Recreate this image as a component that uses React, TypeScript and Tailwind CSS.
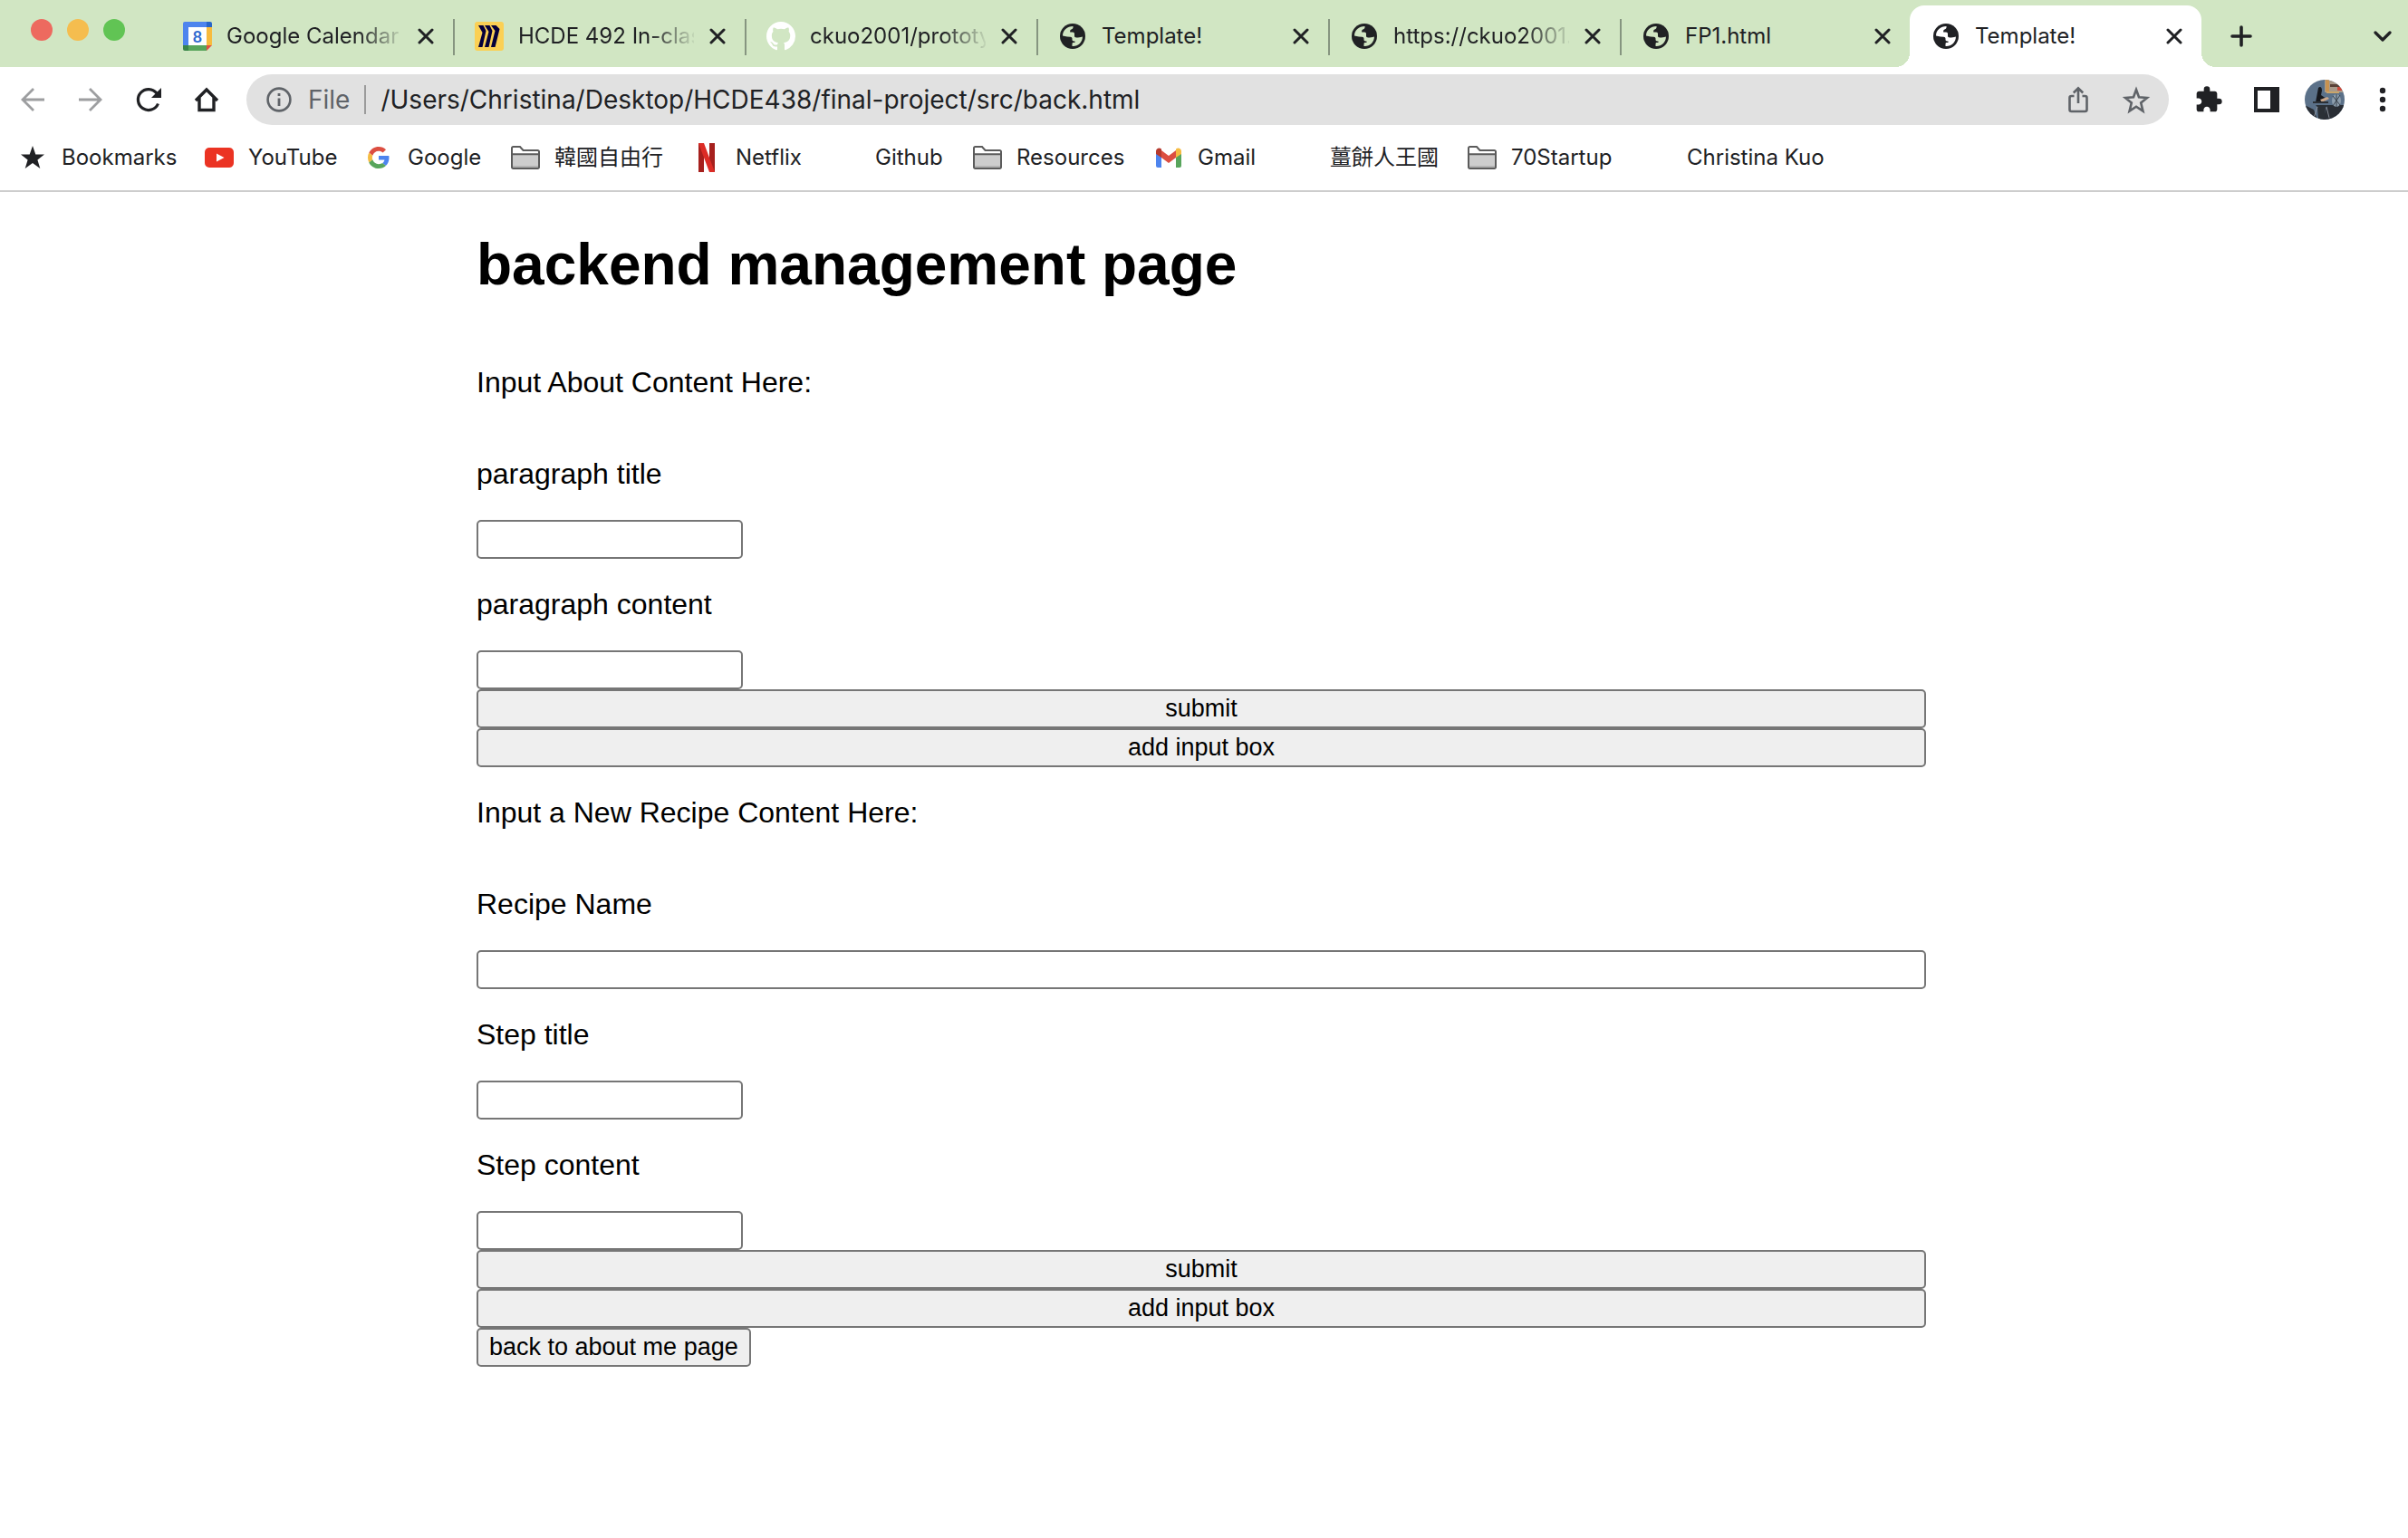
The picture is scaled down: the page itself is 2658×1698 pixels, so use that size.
import React from "react";

const ui = "font-['Inter','Noto_Sans_CJK_TC',sans-serif]";

function Globe() {
  return (
    <svg viewBox="0 0 28 28" className="size-7">
      <circle cx="14" cy="14" r="14" fill="#202124" />
      <path d="M3 13.500C3 7.500 8 3 14.500 3c.3 1.500-.2 2.700-1.500 3.200-1.500.5-2 1.200-1.800 3.300h2.800c1.500 0 2 .8 2 2v2.300c0 1.200.8 1.700 2.200 1.700 2.300 0 4-.2 6.700-1 .2 6-5 11-11.400 10.500v-2.500c0-1 .5-1.500 1.500-1.500h1.500v-1.500c-1.500 0-3-.3-3-1.500v-1.300c0-1.200-.8-2-2-2L8 14.500z" fill="currentColor" />
    </svg>
  );
}

function CalendarIcon() {
  return (
    <svg viewBox="0 0 32 32" className="size-8">
      <path d="M2 0h24v6H6v20H0V2a2 2 0 0 1 2-2z" fill="#4d84ee" />
      <path d="M26 0h4a2 2 0 0 1 2 2v4h-6z" fill="#2866c9" />
      <path d="M26 6h6v20h-6z" fill="#f7bb3d" />
      <path d="M6 26h20v6H6z" fill="#58a55c" />
      <path d="M0 26h6v6H2a2 2 0 0 1-2-2z" fill="#3a8548" />
      <path d="M26 26h6l-6 6z" fill="#e25143" />
      <path d="M6 6h20v20H6z" fill="#fff" />
      <text x="16" y="23" textAnchor="middle" fontSize="19" fontFamily="Roboto" fontWeight="500" fill="#2f69d0">8</text>
    </svg>
  );
}

function MiroIcon() {
  return (
    <svg viewBox="0 0 32 32" className="size-8">
      <rect width="32" height="32" rx="3" fill="#fbd054" />
      <path d="M4 4h5.500l3 6-4 18H4l4.500-16zM11 4h5.500l3 6-4 18H11l4.500-17zM18 4h5.500l4 4-5 20H18l4.500-18z" fill="#05003b" />
    </svg>
  );
}

function GithubIcon() {
  return (
    <svg viewBox="0 0 16 16" className="size-8" fill="#fff">
      <path d="M8 0C3.580 0 0 3.580 0 8c0 3.540 2.290 6.530 5.470 7.590.4.070.55-.17.55-.38 0-.19-.01-.82-.01-1.490-2.010.37-2.530-.49-2.690-.94-.09-.23-.48-.94-.82-1.130-.28-.15-.68-.52-.01-.53.63-.01 1.080.58 1.230.82.72 1.210 1.870.87 2.330.66.07-.52.28-.87.51-1.070-1.780-.2-3.640-.89-3.640-3.950 0-.87.31-1.590.82-2.150-.08-.2-.36-1.020.08-2.120 0 0 .67-.21 2.200.82.64-.18 1.320-.27 2-.27s1.360.09 2 .27c1.530-1.040 2.200-.82 2.200-.82.44 1.100.16 1.920.08 2.120.51.56.82 1.270.82 2.150 0 3.070-1.870 3.750-3.650 3.950.29.25.54.73.54 1.480 0 1.070-.01 1.930-.01 2.200 0 .21.15.46.55.38A8.010 8.010 0 0 0 16 8c0-4.420-3.580-8-8-8z" />
    </svg>
  );
}

function Cross() {
  return (
    <svg viewBox="0 0 18 18" className="size-[18px]" stroke="#202124" strokeWidth="3" strokeLinecap="round">
      <path d="M2 2l14 14M16 2L2 16" />
    </svg>
  );
}

type TabData = { icon: React.ReactNode; title: string; long?: boolean; divider?: boolean; active?: boolean };

const tabs: TabData[] = [
  { icon: <CalendarIcon />, title: "Google Calendar", long: true, divider: true },
  { icon: <MiroIcon />, title: "HCDE 492 In-clas", long: true, divider: true },
  { icon: <GithubIcon />, title: "ckuo2001/prototy", long: true, divider: true },
  { icon: <Globe />, title: "Template!", divider: true },
  { icon: <Globe />, title: "https://ckuo2001.", long: true, divider: true },
  { icon: <Globe />, title: "FP1.html" },
  { icon: <Globe />, title: "Template!", active: true },
];

function Tab({ icon, title, long, divider, active }: TabData) {
  return (
    <div className={`relative flex h-[68px] items-center gap-4 rounded-t-2xl pl-6 ${divider || active ? "w-[322px]" : "w-80"} ${active ? "bg-white pr-5 text-white" : "pr-5 text-[#d1e6c3]"}`}>
      {active && (
        <>
          <span className="absolute bottom-0 -left-4 size-4 bg-[radial-gradient(circle_at_0_0,transparent_16px,white_16px)]" />
          <span className="absolute -right-4 bottom-0 size-4 bg-[radial-gradient(circle_at_100%_0,transparent_16px,white_16px)]" />
        </>
      )}
      <span className="flex w-8 shrink-0 justify-center">{icon}</span>
      <span className={`min-w-0 flex-1 text-2xl whitespace-nowrap text-[#202124] ${long ? "[mask-image:linear-gradient(to_right,black_75%,transparent_102%)]" : ""}`}>{title}</span>
      <button aria-label={`Close ${title}`} className="flex size-5 shrink-0 items-center justify-center"><Cross /></button>
      {divider && <span className="absolute top-[15px] -right-0.5 h-10 w-0.5 bg-[#869580]" />}
    </div>
  );
}

function TabStrip() {
  return (
    <header className="flex h-[74px] items-end bg-[#d1e6c3]">
      <div className="flex h-full w-[178px] shrink-0 items-start gap-4 pt-[21px] pl-[34px]">
        <span className="size-6 rounded-full bg-[#ed6a5f]" />
        <span className="size-6 rounded-full bg-[#f5bd4f]" />
        <span className="size-6 rounded-full bg-[#61c454]" />
      </div>
      {tabs.map((t, i) => <Tab key={i} {...t} />)}
      <button aria-label="New tab" className="ml-8 flex h-[68px] items-center">
        <svg viewBox="0 0 24 24" className="size-6" stroke="#202124" strokeWidth="3.600" strokeLinecap="round"><path d="M12 2v20M2 12h20" /></svg>
      </button>
      <button aria-label="Search tabs" className="mr-[18px] ml-auto flex h-[68px] items-center">
        <svg viewBox="0 0 20 12" className="h-3 w-5" fill="none" stroke="#202124" strokeWidth="3.200" strokeLinecap="round" strokeLinejoin="round"><path d="M2 2l8 8 8-8" /></svg>
      </button>
    </header>
  );
}

function Toolbar() {
  return (
    <div className="flex h-[72px] items-center pr-[22px] pl-5">
      <div className="flex w-[252px] shrink-0 gap-8">
        <button aria-label="Back"><svg viewBox="0 0 32 32" className="size-8" fill="none" stroke="#9d9ea0" strokeWidth="2.800"><path d="M29 16H5M17 4L5 16l12 12" /></svg></button>
        <button aria-label="Forward"><svg viewBox="0 0 32 32" className="size-8" fill="none" stroke="#9d9ea0" strokeWidth="2.800"><path d="M3 16h24M15 4l12 12-12 12" /></svg></button>
        <button aria-label="Reload"><svg viewBox="0 0 32 32" className="size-8" fill="none" stroke="#202124" strokeWidth="3.200"><path d="M26.500 20.500A11.500 11.500 0 1 1 25 9" /><path d="M30 3v11H19z" fill="#202124" stroke="none" /></svg></button>
        <button aria-label="Home"><svg viewBox="0 0 32 32" className="size-8" fill="none" stroke="#202124" strokeWidth="3.400"><path d="M4 17L16 5l12 12M8 14v13.500h16V14" /></svg></button>
      </div>
      <div className="flex h-14 min-w-0 flex-1 items-center rounded-full bg-[#e1e1e1] pr-5 pl-[22px]">
        <svg viewBox="0 0 28 28" className="size-7 shrink-0" fill="none" stroke="#5f6368"><circle cx="14" cy="14" r="12.400" strokeWidth="2.600" /><path d="M14 12.500V21M14 7v3" strokeWidth="2.800" /></svg>
        <span className="ml-[18px] text-[28px] text-[#5f6368]">File</span>
        <span className="mx-4 h-8 w-0.5 bg-[#9b9b9b]" />
        <input aria-label="Address" defaultValue="/Users/Christina/Desktop/HCDE438/final-project/src/back.html" className="min-w-0 flex-1 bg-transparent text-[28px] text-[#202124] outline-none" />
        <button aria-label="Share" className="mr-8"><svg viewBox="0 0 32 32" className="size-8" fill="none" stroke="#5f6368" strokeWidth="2.600"><path d="M11.500 12H8.500a2 2 0 0 0-2 2v13a2 2 0 0 0 2 2h15a2 2 0 0 0 2-2V14a2 2 0 0 0-2-2h-3M16 20V3.500M10.800 8.500L16 3.300l5.200 5.200" /></svg></button>
        <button aria-label="Bookmark this page"><svg viewBox="0 0 32 32" className="size-8" fill="none" stroke="#5f6368" strokeWidth="2.600"><path d="M16 5l3 8.200 9 .8-6.800 5.600 2.200 8.900L16 23.700l-7.400 4.800 2.200-8.900L4 14l9-.8z" /></svg></button>
      </div>
      <div className="ml-7 flex shrink-0 items-center">
        <button aria-label="Extensions"><svg viewBox="0 0 24 24" className="size-8" fill="#202124"><path d="M20.500 11H19V7c0-1.100-.9-2-2-2h-4V3.500a2.500 2.500 0 0 0-5 0V5H4c-1.100 0-2 .9-2 2v3.800h1.500c1.500 0 2.700 1.200 2.700 2.700S5 16.200 3.500 16.200H2V20c0 1.100.9 2 2 2h3.800v-1.500c0-1.500 1.200-2.700 2.700-2.700s2.700 1.200 2.700 2.700V22H17c1.100 0 2-.9 2-2v-4h1.500a2.500 2.500 0 0 0 0-5z" /></svg></button>
        <button aria-label="Side panel" className="ml-8"><svg viewBox="0 0 32 32" className="size-8"><path fillRule="evenodd" d="M2 2h28v28H2zM6 6v20h14V6z" fill="#202124" /></svg></button>
        <button aria-label="Profile" className="ml-[26px]">
          <svg viewBox="0 0 44 44" className="size-11">
            <clipPath id="face"><circle cx="22" cy="22" r="22" /></clipPath>
            <g clipPath="url(#face)">
              <path d="M0 0h44v44H0z" fill="#5b7189" />
              <path d="M22 0h22v14H22z" fill="#a89a8a" />
              <path d="M23 0h4v13h-4z" fill="#c8924f" />
              <path d="M28 5h16v3H28z" fill="#5a4238" />
              <path d="M36 8h5v4h-5z" fill="#cc4a3c" />
              <path d="M24 13h14v2H24z" fill="#c9a46a" />
              <path d="M0 28l10 5 4 11H0zM25 28h19v16H20z" fill="#2a2e35" />
              <path d="M15 9c2-2 4-1 4 3l-1 5 6 4-4 5-8-1z" fill="#17191e" />
              <path d="M17 22l8-3 2 2-8 4z" fill="#c9a68a" />
              <path d="M9 24h17v2H9zM12 28h14l-3 3-1 13h-7l-1-14z" fill="#2b3036" />
              <path d="M14 30l-4 12M24 30l3 12" stroke="#8a9099" />
              <ellipse cx="35" cy="23" rx="5" ry="7" fill="#8c9dad" />
              <path d="M31 18l8 10M39 17l-8 12M35 16v14" stroke="#39424c" />
            </g>
          </svg>
        </button>
        <button aria-label="Menu" className="ml-9"><svg viewBox="0 0 12 32" className="h-8 w-3" fill="#202124"><circle cx="6" cy="6" r="3.200" /><circle cx="6" cy="16" r="3.200" /><circle cx="6" cy="26" r="3.200" /></svg></button>
      </div>
    </div>
  );
}

function Folder() {
  return (
    <svg viewBox="0 0 32 32" className="size-8">
      <path d="M1 27V4.500h10l3.500 3.500H31v19z" fill="#fff" />
      <path d="M1 12h30v15.500H1z" fill="#cdcdcd" />
      <path d="M2 26h28" stroke="#b3b3b3" strokeWidth="2" />
      <path d="M1 26.500v-21a1.500 1.500 0 0 1 1.500-1.500H10l3.500 4H29.500A1.500 1.500 0 0 1 31 9.500v17a1.500 1.500 0 0 1-1.500 1.500h-27A1.500 1.500 0 0 1 1 26.500zM1 12.200h30" fill="none" stroke="#5b5b5b" strokeWidth="2" />
    </svg>
  );
}

const bookmarks: { icon: React.ReactNode; label: string; width: string }[] = [
  { label: "Bookmarks", width: "w-[206px]", icon: <svg viewBox="0 0 32 32" className="size-8" fill="#202124"><path d="M16 3l3.300 9.500H29l-7.600 6 2.900 9.500L16 22l-8.300 6 2.900-9.500L3 12.500h9.700z" /></svg> },
  { label: "YouTube", width: "w-44", icon: <svg viewBox="0 0 32 32" className="size-8"><rect y="5" width="32" height="22" rx="5" fill="#eb3323" /><path d="M13 11.500l8.500 4.500-8.500 4.500z" fill="#fff" /></svg> },
  { label: "Google", width: "w-[162px]", icon: <svg viewBox="0 0 48 48" className="size-6"><path fill="#dc4e41" d="M24 9.500c3.540 0 6.710 1.220 9.210 3.600l6.850-6.850C35.900 2.380 30.470 0 24 0 14.620 0 6.510 5.380 2.560 13.220l7.980 6.190C12.430 13.720 17.740 9.500 24 9.500z" /><path fill="#4d84ee" d="M46.980 24.550c0-1.570-.15-3.090-.38-4.550H24v9.020h12.940c-.58 2.960-2.260 5.480-4.780 7.180l7.730 6c4.510-4.180 7.090-10.360 7.090-17.650z" /><path fill="#f5bb41" d="M10.530 28.590c-.48-1.450-.76-2.990-.76-4.590s.27-3.140.76-4.590l-7.980-6.190C.92 16.460 0 20.120 0 24c0 3.880.92 7.540 2.560 10.780l7.970-6.190z" /><path fill="#58a55c" d="M24 48c6.480 0 11.930-2.130 15.890-5.810l-7.730-6c-2.150 1.450-4.920 2.300-8.160 2.300-6.260 0-11.570-4.220-13.470-9.910l-7.980 6.190C6.510 42.620 14.620 48 24 48z" /></svg> },
  { label: "韓國自由行", width: "w-50", icon: <Folder /> },
  { label: "Netflix", width: "w-[154px]", icon: <svg viewBox="0 0 18 32" className="h-8 w-[18px]"><path d="M0 0h6v32H0zM12 0h6v32h-6z" fill="#a6201d" /><path d="M0 0h6l12 32h-6z" fill="#dc2c26" /></svg> },
  { label: "Github", width: "w-[156px]", icon: null },
  { label: "Resources", width: "w-50", icon: <Folder /> },
  { label: "Gmail", width: "w-[146px]", icon: <svg viewBox="0 0 28 22" className="h-[22px] w-7"><path d="M0 4l6 5v13H2a2 2 0 0 1-2-2z" fill="#4d84ee" /><path d="M22 9l6-5v16a2 2 0 0 1-2 2h-4z" fill="#58a55c" /><path d="M6 3l8 6 8-6v8l-8 6-8-6z" fill="#dc4e41" /><path d="M0 4c0-3 3.500-4.500 6-2.500V11L0 7z" fill="#b63a2d" /><path d="M28 4c0-3-3.500-4.500-6-2.500V11l6-4z" fill="#f5bb41" /></svg> },
  { label: "薑餅人王國", width: "w-50", icon: null },
  { label: "70Startup", width: "w-[194px]", icon: <Folder /> },
  { label: "Christina Kuo", width: "w-52", icon: null },
];

function BookmarksBar() {
  return (
    <nav className="flex h-[66px] items-center border-b-2 border-[#cdcdcd] pb-2 pl-5">
      {bookmarks.map((b) => (
        <a key={b.label} href="#" className={`flex shrink-0 items-center gap-4 text-2xl whitespace-nowrap text-[#202124] ${b.width}`}>
          <span className="flex w-8 shrink-0 justify-center">{b.icon}</span>
          {b.label}
        </a>
      ))}
    </nav>
  );
}

const box = "h-[43px] rounded-[5px] border-2 border-[#767676]";
const button = `${box} block bg-[#efefef] text-[27px] leading-none`;

function Field({ id, label, wide }: { id: string; label: string; wide?: boolean }) {
  return (
    <>
      <label htmlFor={id} className="my-8 block">{label}</label>
      <input id={id} type="text" className={`${box} block bg-white px-1 text-[27px] ${wide ? "w-full" : "w-[294px]"}`} />
    </>
  );
}

export default function App() {
  return (
    <div className="min-h-screen bg-white">
      <div className={ui}>
        <TabStrip />
        <Toolbar />
        <BookmarksBar />
      </div>
      <div className="pr-1.5 font-['Liberation_Sans',Arial,sans-serif] text-[32px] leading-[37px] text-black">
        <main className="mx-auto max-w-[1600px] pt-[43px]">
          <h1 className="mb-[75px] text-[64px] leading-[74px] font-bold">backend management page</h1>
          <form onSubmit={(e) => e.preventDefault()}>
            <p className="mb-16">Input About Content Here:</p>
            <Field id="paragraph-title" label="paragraph title" />
            <Field id="paragraph-content" label="paragraph content" />
            <button className={`${button} w-full`}>submit</button>
            <button type="button" className={`${button} w-full`}>add input box</button>
          </form>
          <form onSubmit={(e) => e.preventDefault()}>
            <p className="mt-8 mb-16">Input a New Recipe Content Here:</p>
            <Field id="recipe-name" label="Recipe Name" wide />
            <Field id="step-title" label="Step title" />
            <Field id="step-content" label="Step content" />
            <button className={`${button} w-full`}>submit</button>
            <button type="button" className={`${button} w-full`}>add input box</button>
          </form>
          <button type="button" className={`${button} px-3`}>back to about me page</button>
        </main>
      </div>
    </div>
  );
}
